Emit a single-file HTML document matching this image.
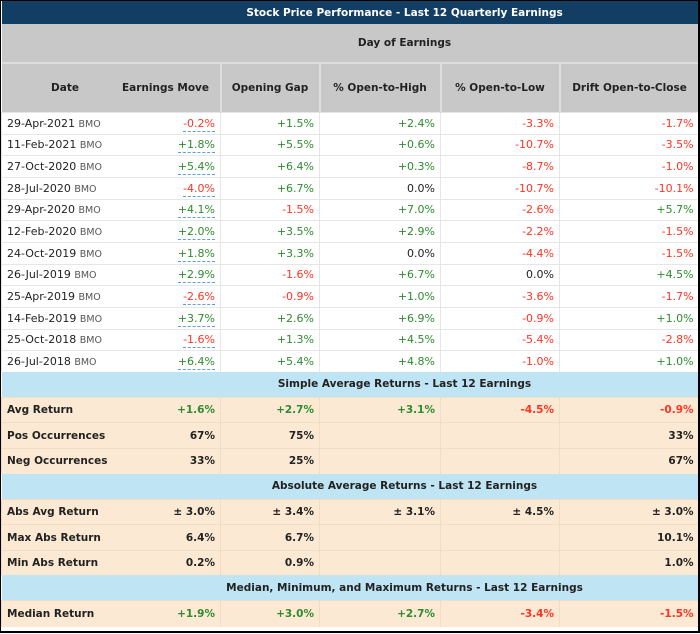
<!DOCTYPE html>
<html><head><meta charset="utf-8"><style>
body{margin:0;background:#fff;width:700px;height:634px;overflow:hidden}
.wrap{position:absolute;left:0;top:0;width:697px;height:630px;border:1px solid #000;border-right-width:2px;border-bottom-width:2px;overflow:hidden;background:#fff}
table{border-collapse:collapse;table-layout:fixed;width:697px;font-family:"DejaVu Sans","Liberation Sans",sans-serif;font-size:11px;color:#222}
td{padding:0 5px;white-space:nowrap;overflow:hidden;text-align:right}
.t td{background:#133e63;color:#fff;font-weight:bold;text-align:center;height:23px;font-size:10.5px;padding-left:114px}
.g td{background:#c8c8c8;font-weight:bold;text-align:center;font-size:10.5px}
.h td{border-left:2px solid #ddd}
.d td{height:20.67px;border-top:1px solid #e6e6e6;border-left:1px solid #e6e6e6}
.d td:first-child{text-align:left}
.d td:nth-child(2){border-left:none}
.b td{background:#bfe4f4;font-weight:bold;text-align:center;height:25px;font-size:10.5px;padding-left:114px}
.s td{background:#fbe9d3;font-weight:bold;height:24.6px;border-top:1px solid #f3dcc4;border-left:1px solid #f3dcc4;font-size:10.5px}
.s td:first-child{text-align:left}
.s td:nth-child(2){border-left:none}
.gr{color:#2e8b2e}.rd{color:#f32}
.u span{border-bottom:1px dashed #5aa0e0;padding-bottom:1px}
.bmo{color:#555;font-size:9.5px}
</style></head><body><div class="wrap"><table>
<colgroup><col style="width:110px"><col style="width:109px"><col style="width:99px"><col style="width:121px"><col style="width:119px"><col style="width:139px"></colgroup>
<tr class="t"><td colspan="6">Stock Price Performance - Last 12 Quarterly Earnings</td></tr>
<tr class="g"><td colspan="6" style="height:38px;border-bottom:2px solid #ddd;padding-left:114px">Day of Earnings</td></tr>
<tr class="g h"><td style="height:48px;border-left:none;padding-left:22px">Date</td><td style="border-left:none">Earnings Move</td><td>Opening Gap</td><td>% Open-to-High</td><td>% Open-to-Low</td><td>Drift Open-to-Close</td></tr>
<tr class="d"><td>29-Apr-2021 <span class="bmo">BMO</span></td><td class="u rd"><span>-0.2%</span></td><td class="gr">+1.5%</td><td class="gr">+2.4%</td><td class="rd">-3.3%</td><td class="rd">-1.7%</td></tr>
<tr class="d"><td>11-Feb-2021 <span class="bmo">BMO</span></td><td class="u gr"><span>+1.8%</span></td><td class="gr">+5.5%</td><td class="gr">+0.6%</td><td class="rd">-10.7%</td><td class="rd">-3.5%</td></tr>
<tr class="d"><td>27-Oct-2020 <span class="bmo">BMO</span></td><td class="u gr"><span>+5.4%</span></td><td class="gr">+6.4%</td><td class="gr">+0.3%</td><td class="rd">-8.7%</td><td class="rd">-1.0%</td></tr>
<tr class="d"><td>28-Jul-2020 <span class="bmo">BMO</span></td><td class="u rd"><span>-4.0%</span></td><td class="gr">+6.7%</td><td>0.0%</td><td class="rd">-10.7%</td><td class="rd">-10.1%</td></tr>
<tr class="d"><td>29-Apr-2020 <span class="bmo">BMO</span></td><td class="u gr"><span>+4.1%</span></td><td class="rd">-1.5%</td><td class="gr">+7.0%</td><td class="rd">-2.6%</td><td class="gr">+5.7%</td></tr>
<tr class="d"><td>12-Feb-2020 <span class="bmo">BMO</span></td><td class="u gr"><span>+2.0%</span></td><td class="gr">+3.5%</td><td class="gr">+2.9%</td><td class="rd">-2.2%</td><td class="rd">-1.5%</td></tr>
<tr class="d"><td>24-Oct-2019 <span class="bmo">BMO</span></td><td class="u gr"><span>+1.8%</span></td><td class="gr">+3.3%</td><td>0.0%</td><td class="rd">-4.4%</td><td class="rd">-1.5%</td></tr>
<tr class="d"><td>26-Jul-2019 <span class="bmo">BMO</span></td><td class="u gr"><span>+2.9%</span></td><td class="rd">-1.6%</td><td class="gr">+6.7%</td><td>0.0%</td><td class="gr">+4.5%</td></tr>
<tr class="d"><td>25-Apr-2019 <span class="bmo">BMO</span></td><td class="u rd"><span>-2.6%</span></td><td class="rd">-0.9%</td><td class="gr">+1.0%</td><td class="rd">-3.6%</td><td class="rd">-1.7%</td></tr>
<tr class="d"><td>14-Feb-2019 <span class="bmo">BMO</span></td><td class="u gr"><span>+3.7%</span></td><td class="gr">+2.6%</td><td class="gr">+6.9%</td><td class="rd">-0.9%</td><td class="gr">+1.0%</td></tr>
<tr class="d"><td>25-Oct-2018 <span class="bmo">BMO</span></td><td class="u rd"><span>-1.6%</span></td><td class="gr">+1.3%</td><td class="gr">+4.5%</td><td class="rd">-5.4%</td><td class="rd">-2.8%</td></tr>
<tr class="d"><td>26-Jul-2018 <span class="bmo">BMO</span></td><td class="u gr"><span>+6.4%</span></td><td class="gr">+5.4%</td><td class="gr">+4.8%</td><td class="rd">-1.0%</td><td class="gr">+1.0%</td></tr>
<tr class="b"><td colspan="6">Simple Average Returns - Last 12 Earnings</td></tr>
<tr class="s"><td>Avg Return</td><td class="gr">+1.6%</td><td class="gr">+2.7%</td><td class="gr">+3.1%</td><td class="rd">-4.5%</td><td class="rd">-0.9%</td></tr>
<tr class="s"><td>Pos Occurrences</td><td>67%</td><td>75%</td><td></td><td></td><td>33%</td></tr>
<tr class="s"><td>Neg Occurrences</td><td>33%</td><td>25%</td><td></td><td></td><td>67%</td></tr>
<tr class="b"><td colspan="6">Absolute Average Returns - Last 12 Earnings</td></tr>
<tr class="s"><td>Abs Avg Return</td><td>± 3.0%</td><td>± 3.4%</td><td>± 3.1%</td><td>± 4.5%</td><td>± 3.0%</td></tr>
<tr class="s"><td>Max Abs Return</td><td>6.4%</td><td>6.7%</td><td></td><td></td><td>10.1%</td></tr>
<tr class="s"><td>Min Abs Return</td><td>0.2%</td><td>0.9%</td><td></td><td></td><td>1.0%</td></tr>
<tr class="b"><td colspan="6">Median, Minimum, and Maximum Returns - Last 12 Earnings</td></tr>
<tr class="s"><td style="height:26px">Median Return</td><td class="gr">+1.9%</td><td class="gr">+3.0%</td><td class="gr">+2.7%</td><td class="rd">-3.4%</td><td class="rd">-1.5%</td></tr>
</table></div></body></html>
